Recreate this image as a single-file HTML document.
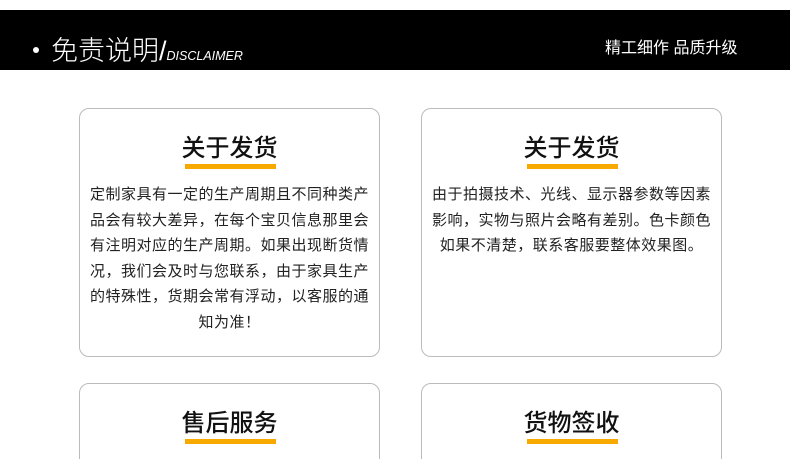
<!DOCTYPE html>
<html><head><meta charset="utf-8"><style>
*{margin:0;padding:0;box-sizing:border-box}
html,body{width:790px;height:459px;overflow:hidden}
body{background:#fff;font-family:"Liberation Sans","Noto Sans CJK SC",sans-serif;position:relative}
.bar{position:absolute;left:0;top:10px;width:790px;height:60px;background:#000;color:#fff}
.dot{position:absolute;left:33px;top:37px;width:6px;height:6px;border-radius:50%;background:#fff}
.t1{position:absolute;left:51px;top:21px;font-size:27px;font-weight:300;line-height:40px;white-space:nowrap}
.t1 i{font-size:12.5px;font-style:italic}
.t2{position:absolute;left:605px;top:28px;font-size:16px;line-height:22px;white-space:nowrap}
.card{position:absolute;width:301px;border:1px solid #bbb;border-radius:10px;background:#fff}
.h{position:absolute;left:0;right:0;top:24px;text-align:center;font-size:24px;line-height:32px;color:#111;font-weight:500}
.u{position:absolute;left:50%;margin-left:-45px;top:55px;width:91px;height:5px;background:#f7a900}
.p{position:absolute;left:0;right:0;top:73px;text-align:center;font-size:15px;letter-spacing:0.5px;line-height:25.5px;color:#222;white-space:nowrap}
</style></head><body>
<div class="bar"><div class="dot"></div><div class="t1">免责说明/<i>DISCLAIMER</i></div><div class="t2">精工细作 品质升级</div></div>
<div class="card" style="left:79px;top:108px;height:249px"><div class="h">关于发货</div><div class="u"></div><div class="p">定制家具有一定的生产周期且不同种类产<br>品会有较大差异，在每个宝贝信息那里会<br>有注明对应的生产周期。如果出现断货情<br>况，我们会及时与您联系，由于家具生产<br>的特殊性，货期会常有浮动，以客服的通<br>知为准！</div></div>
<div class="card" style="left:421px;top:108px;height:249px"><div class="h">关于发货</div><div class="u"></div><div class="p">由于拍摄技术、光线、显示器参数等因素<br>影响，实物与照片会略有差别。色卡颜色<br>如果不清楚，联系客服要整体效果图。</div></div>
<div class="card" style="left:79px;top:383px;height:90px"><div class="h">售后服务</div><div class="u"></div></div>
<div class="card" style="left:421px;top:383px;height:90px"><div class="h">货物签收</div><div class="u"></div></div>
</body></html>
